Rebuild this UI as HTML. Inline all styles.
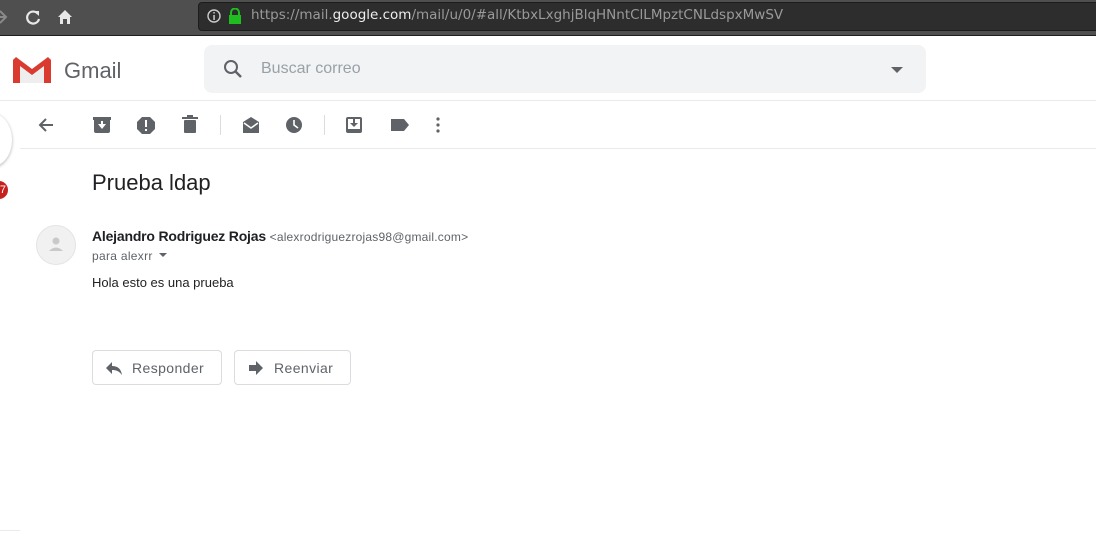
<!DOCTYPE html>
<html><head><meta charset="utf-8"><style>
*{margin:0;padding:0;box-sizing:border-box}
body{width:1096px;height:550px;overflow:hidden;background:#fff;font-family:"Liberation Sans",sans-serif;position:relative}
.abs{position:absolute}
</style></head><body>
<div class="abs" style="left:0;top:0;width:1096px;height:36px;background:#4f4f4f;border-bottom:1px solid #1e1e1e"></div>
<div class="abs" style="left:198px;top:2px;width:910px;height:29px;background:#2d2d2d;border:1px solid #1c1c1c;border-radius:4px"></div>
<svg class="abs" style="left:0;top:6px" width="90" height="22" viewBox="0 0 90 22">
<path d="M0 5 L6 11 L0 17 M-2 11 H6" stroke="#8a8a8a" stroke-width="2" fill="none"/>
<path d="M38 8 A6 6 0 1 0 39 13" stroke="#e8e8e8" stroke-width="2.2" fill="none"/><path d="M34 5 L39 5 L39 10Z" fill="#e8e8e8"/>
<path d="M58 11 L65 4 L72 11 H70 V18 H60 V11Z" fill="#e8e8e8"/><rect x="63" y="13" width="4" height="5" fill="#4f4f4f"/>
</svg>
<svg class="abs" style="left:206px;top:8px" width="40" height="18"><circle cx="8" cy="8" r="6" stroke="#ccc" stroke-width="1.4" fill="none"/><rect x="7.3" y="7" width="1.5" height="5" fill="#ccc"/><rect x="7.3" y="4" width="1.5" height="1.5" fill="#ccc"/>
<rect x="23" y="7" width="12" height="9" fill="#1fbd1f"/><path d="M25 7 V4.5 a4 4 0 0 1 8 0 V7" stroke="#1fbd1f" stroke-width="2" fill="none"/></svg>
<div class="abs" style="left:251px;top:7px;font-family:'DejaVu Sans',sans-serif;font-size:13.5px;color:#9a9a9a;white-space:nowrap">https://mail.<span style="color:#eee">google.com</span>/mail/u/0/#all/KtbxLxghjBlqHNntClLMpztCNLdspxMwSV</div>

<svg class="abs" style="left:13px;top:56px" width="38" height="27" viewBox="0 0 38 27"><path d="M0 2 L19 16 L38 2 V27 H0Z" fill="#eee"/><path d="M0 4 V27 H7 V10 L19 19 L31 10 V27 H38 V4 L35 1 L19 13 L3 1Z" fill="#d93b2f"/></svg>
<div class="abs" style="left:64px;top:58px;font-size:22px;color:#5f6368">Gmail</div>
<div class="abs" style="left:204px;top:45px;width:722px;height:48px;background:#f1f3f4;border-radius:8px"></div>
<svg class="abs" style="left:222px;top:58px" width="22" height="22"><circle cx="9" cy="9" r="6" stroke="#5f6368" stroke-width="2" fill="none"/><path d="M13 13 L19 19" stroke="#5f6368" stroke-width="2.4"/></svg>
<div class="abs" style="left:261px;top:60px;font-size:16px;color:#9aa0a6">Buscar correo</div>
<svg class="abs" style="left:890px;top:66px" width="14" height="8"><path d="M1 1 H13 L7 7Z" fill="#5f6368"/></svg>
<div class="abs" style="left:0;top:100px;width:1096px;height:1px;background:#e8eaed"></div>

<div class="abs" style="left:-30px;top:113px;width:42px;height:54px;border-radius:50%;box-shadow:0 1px 3px rgba(0,0,0,.3);background:#fff"></div>
<div class="abs" style="left:-10px;top:181px;width:18px;height:18px;border-radius:50%;background:#c5221f;color:#fff;font-size:11px;text-align:right;padding-right:2px;line-height:18px">7</div>

<svg class="abs" style="left:31px;top:110px" width="420" height="30" fill="#5f6368">
<path d="M22 15 H9 M15 9 L9 15 L15 21" stroke="#5f6368" stroke-width="2" fill="none"/>
<rect x="63" y="8" width="16" height="15" rx="2"/><rect x="62" y="7" width="18" height="3" fill="#5f6368"/><path d="M67 14 H75 L71 19Z" fill="#fff"/><rect x="70" y="11" width="2" height="4" fill="#fff"/>
<path d="M111 7 H119 L124 12 V19 L119 24 H111 L106 19 V12Z"/><rect x="114" y="10" width="2" height="7" fill="#fff"/><rect x="114" y="19" width="2" height="2" fill="#fff"/>
<rect x="153" y="10" width="12" height="13" rx="1"/><rect x="151" y="7" width="16" height="2"/><rect x="156" y="5" width="6" height="2"/>
<rect x="189" y="5" width="1" height="20" fill="#dadce0"/>
<path d="M212 12 L220 7 L228 12 V23 H212Z"/><path d="M213 13 L220 18 L227 13" stroke="#fff" stroke-width="1.5" fill="none"/>
<circle cx="263" cy="15" r="8"/><path d="M263 10 V15 L267 18" stroke="#fff" stroke-width="1.6" fill="none"/>
<rect x="293" y="5" width="1" height="20" fill="#dadce0"/>
<rect x="315" y="7" width="16" height="16" rx="2"/><rect x="317" y="9" width="12" height="10" fill="#fff"/><path d="M319 13 H327 L323 17Z"/><rect x="322" y="9" width="2" height="5"/>
<path d="M360 9 H373 L378 15 L373 21 H360Z"/>
<circle cx="407" cy="9" r="1.6"/><circle cx="407" cy="15" r="1.6"/><circle cx="407" cy="21" r="1.6"/>
</svg>
<div class="abs" style="left:20px;top:148px;width:1076px;height:1px;background:#e8eaed"></div>

<div class="abs" style="left:92px;top:170px;font-size:22px;color:#202124">Prueba ldap</div>
<div class="abs" style="left:36px;top:225px;width:40px;height:40px;border-radius:50%;background:#f1f1f1;border:1px solid #e4e4e4"></div>
<svg class="abs" style="left:47px;top:235px" width="18" height="18"><circle cx="9" cy="6" r="3.5" fill="#c9c9c9"/><path d="M2 16 Q9 9 16 16Z" fill="#c9c9c9"/></svg>
<div class="abs" style="left:92px;top:228px;font-size:14px;font-weight:bold;color:#202124;white-space:nowrap;letter-spacing:-.2px">Alejandro Rodriguez Rojas <span style="font-weight:normal;font-size:12px;color:#5f6368;letter-spacing:.2px">&lt;alexrodriguezrojas98@gmail.com&gt;</span></div>
<div class="abs" style="left:92px;top:249px;font-size:12px;color:#5f6368;letter-spacing:.3px">para alexrr</div>
<svg class="abs" style="left:159px;top:253px" width="8" height="5"><path d="M0 0 H8 L4 4Z" fill="#5f6368"/></svg>
<div class="abs" style="left:92px;top:275px;font-size:13px;color:#222">Hola esto es una prueba</div>

<div class="abs" style="left:92px;top:350px;width:130px;height:35px;border:1px solid #dadce0;border-radius:4px"></div>
<svg class="abs" style="left:105px;top:360px" width="18" height="16"><path d="M7 2 L1 8 L7 14 V10 C11 10 14 11 17 15 C16 9 13 6 7 6Z" fill="#5f6368"/></svg>
<div class="abs" style="left:132px;top:360px;font-size:14px;color:#5f6368;letter-spacing:.4px">Responder</div>
<div class="abs" style="left:234px;top:350px;width:117px;height:35px;border:1px solid #dadce0;border-radius:4px"></div>
<svg class="abs" style="left:248px;top:360px" width="16" height="16"><path d="M1 5 H8 V1 L15 8 L8 15 V11 H1Z" fill="#5f6368"/></svg>
<div class="abs" style="left:274px;top:360px;font-size:14px;color:#5f6368;letter-spacing:.4px">Reenviar</div>
<div class="abs" style="left:0;top:530px;width:20px;height:1px;background:#e8eaed"></div>
</body></html>
